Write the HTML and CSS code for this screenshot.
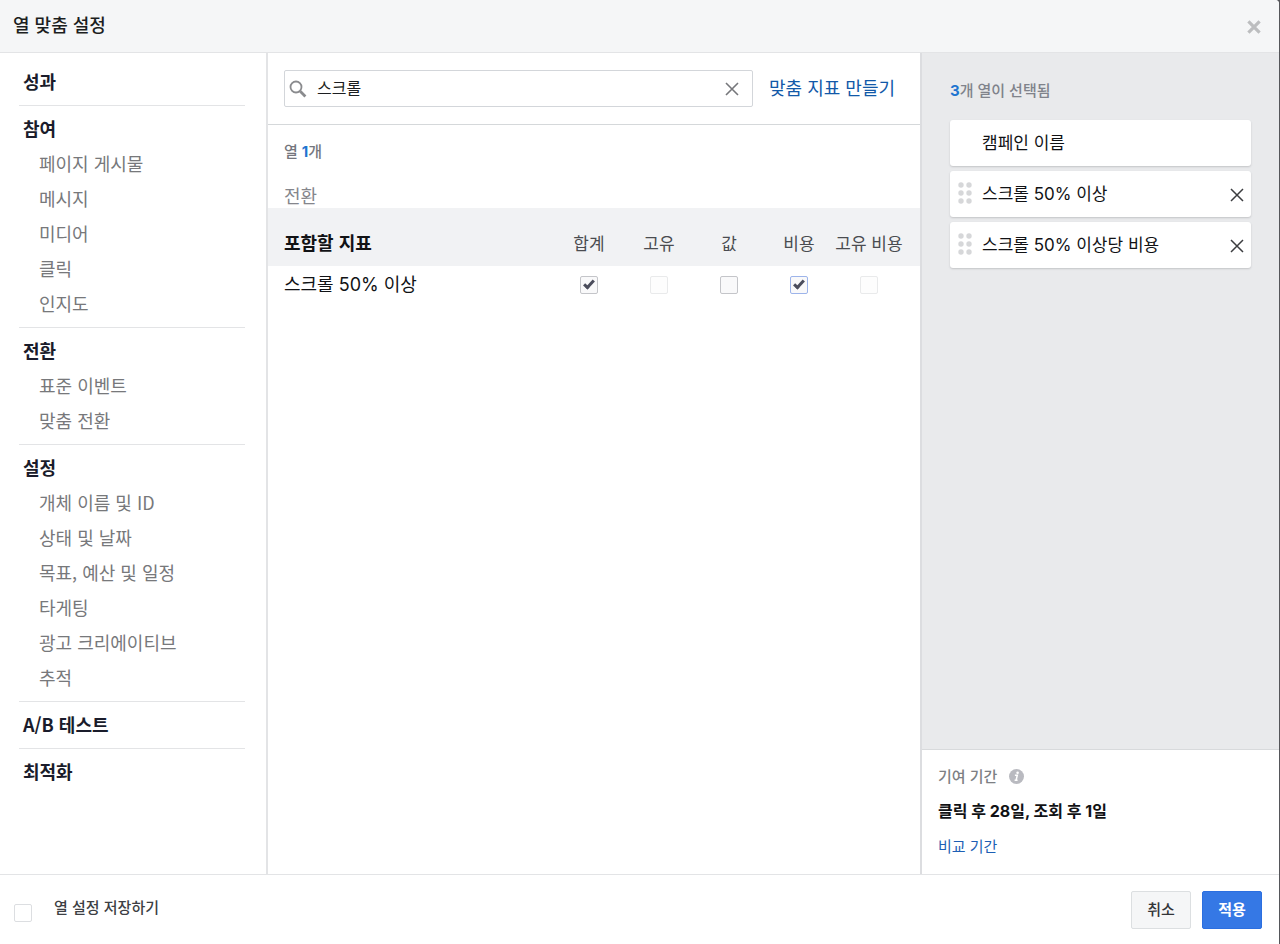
FILE: index.html
```html
<!DOCTYPE html>
<html lang="ko">
<head>
<meta charset="utf-8">
<title>열 맞춤 설정</title>
<link rel="stylesheet" href="styles.css">
</head>
<body>
<div class="dialog">
  <header class="dialog-header">
    <h1 class="dialog-title">열 맞춤 설정</h1>
    <button class="icon-button close-button" type="button" aria-label="닫기">
      <svg width="14" height="14" viewBox="0 0 14 14" fill="none" stroke="#bcbdbf" stroke-width="3.2"><path d="M1.4 1.4 12.6 12.6M12.6 1.4 1.4 12.6"/></svg>
    </button>
  </header>

  <div class="dialog-body">
    <nav class="categories">
      <section class="group"><h2 class="group-title">성과</h2></section>
      <section class="group">
        <h2 class="group-title">참여</h2>
        <a class="group-link" href="#">페이지 게시물</a>
        <a class="group-link" href="#">메시지</a>
        <a class="group-link" href="#">미디어</a>
        <a class="group-link" href="#">클릭</a>
        <a class="group-link" href="#">인지도</a>
      </section>
      <section class="group">
        <h2 class="group-title">전환</h2>
        <a class="group-link" href="#">표준 이벤트</a>
        <a class="group-link" href="#">맞춤 전환</a>
      </section>
      <section class="group">
        <h2 class="group-title">설정</h2>
        <a class="group-link" href="#">개체 이름 및 ID</a>
        <a class="group-link" href="#">상태 및 날짜</a>
        <a class="group-link" href="#">목표, 예산 및 일정</a>
        <a class="group-link" href="#">타게팅</a>
        <a class="group-link" href="#">광고 크리에이티브</a>
        <a class="group-link" href="#">추적</a>
      </section>
      <section class="group"><h2 class="group-title">A/B 테스트</h2></section>
      <section class="group"><h2 class="group-title">최적화</h2></section>
    </nav>

    <main class="metrics">
      <div class="search-row">
        <div class="search-box">
          <svg width="18" height="18" viewBox="0 0 18 18" fill="none" stroke="#8a8b8e"><circle cx="7" cy="7" r="5.5" stroke-width="1.8"/><path d="M11.2 11.2 16.4 16.4" stroke-width="2.8"/></svg>
          <input class="search-input" type="text" value="스크롤" aria-label="검색">
          <button class="icon-button" type="button" aria-label="지우기">
            <svg width="14" height="14" viewBox="0 0 14 14" fill="none" stroke="#76777b" stroke-width="1.6"><path d="M1 1 13 13M13 1 1 13"/></svg>
          </button>
        </div>
        <a class="create-link" href="#">맞춤 지표 만들기</a>
      </div>
      <p class="count">열 <b class="number">1</b>개</p>
      <h3 class="section-title">전환</h3>
      <table class="metric-table">
        <thead>
          <tr><th class="name" scope="col">포함할 지표</th><th scope="col">합계</th><th scope="col">고유</th><th scope="col">값</th><th scope="col">비용</th><th class="last" scope="col">고유 비용</th></tr>
        </thead>
        <tbody>
          <tr>
            <th class="name latin" scope="row">스크롤 50% 이상</th>
            <td><input class="check" type="checkbox" checked aria-label="합계"></td>
            <td><input class="check" type="checkbox" disabled aria-label="고유"></td>
            <td><input class="check" type="checkbox" aria-label="값"></td>
            <td><input class="check focused" type="checkbox" checked aria-label="비용"></td>
            <td class="last"><input class="check" type="checkbox" disabled aria-label="고유 비용"></td>
          </tr>
        </tbody>
      </table>
    </main>

    <aside class="selection">
      <div class="selected">
        <p class="selected-count"><b class="number">3</b>개 열이 선택됨</p>
        <ul class="cards">
          <li class="card"><span class="grip"></span><span class="card-name">캠페인 이름</span></li>
          <li class="card">
            <svg class="grip" width="14" height="22" viewBox="0 0 14 22" fill="#d6d7d9"><circle cx="3" cy="3" r="2.7"/><circle cx="11" cy="3" r="2.7"/><circle cx="3" cy="11" r="2.7"/><circle cx="11" cy="11" r="2.7"/><circle cx="3" cy="19" r="2.7"/><circle cx="11" cy="19" r="2.7"/></svg>
            <span class="card-name">스크롤 50% 이상</span>
            <button class="icon-button remove-button" type="button" aria-label="삭제"><svg width="14" height="14" viewBox="0 0 14 14" fill="none" stroke="#3c3d40" stroke-width="1.5"><path d="M1 1 13 13M13 1 1 13"/></svg></button>
          </li>
          <li class="card">
            <svg class="grip" width="14" height="22" viewBox="0 0 14 22" fill="#d6d7d9"><circle cx="3" cy="3" r="2.7"/><circle cx="11" cy="3" r="2.7"/><circle cx="3" cy="11" r="2.7"/><circle cx="11" cy="11" r="2.7"/><circle cx="3" cy="19" r="2.7"/><circle cx="11" cy="19" r="2.7"/></svg>
            <span class="card-name">스크롤 50% 이상당 비용</span>
            <button class="icon-button remove-button" type="button" aria-label="삭제"><svg width="14" height="14" viewBox="0 0 14 14" fill="none" stroke="#3c3d40" stroke-width="1.5"><path d="M1 1 13 13M13 1 1 13"/></svg></button>
          </li>
        </ul>
      </div>
      <div class="attribution">
        <p class="attribution-label">기여 기간
          <svg width="15" height="15" viewBox="0 0 15 15"><circle cx="7.5" cy="7.5" r="7.5" fill="#b9bac0"/><circle cx="8.6" cy="3.7" r="1.3" fill="#fff"/><path d="M5.9 6.3H8.3L7.1 11.3H8.6M5.6 11.3H7.1" fill="none" stroke="#fff" stroke-width="1.5"/></svg>
        </p>
        <p class="attribution-value">클릭 후 28일, 조회 후 1일</p>
        <a class="attribution-link" href="#">비교 기간</a>
      </div>
    </aside>
  </div>

  <footer class="dialog-footer">
    <input class="check save-check" type="checkbox" id="save">
    <label class="save-label" for="save">열 설정 저장하기</label>
    <button class="button" type="button">취소</button>
    <button class="button primary" type="button">적용</button>
  </footer>
</div>
</body>
</html>
```
FILE: styles.css
```css
* {
  box-sizing: border-box;
}

body {
  margin: 0;
  background: #55565a;
  color: #1c1e21;
  font-family: "Noto Sans CJK KR", sans-serif;
  font-size: 15px;
  line-height: 24px;
}

h1, h2, h3, p, ul {
  margin: 0;
  padding: 0;
  font-size: inherit;
}

a {
  text-decoration: none;
}

button, input {
  font: inherit;
}

.latin, .count, .selected-count, .card-name, .attribution-value {
  font-family: Inter, "Noto Sans CJK KR", sans-serif;
}

.icon-button {
  display: flex;
  padding: 0;
  border: 0;
  background: none;
}

.number {
  color: #1f75d0;
  font-weight: 700;
}

.dialog {
  display: flex;
  flex-direction: column;
  min-height: 100vh;
  margin-right: 1px;
  border-top-right-radius: 4px;
  background: #fff;
}

.dialog-header {
  display: flex;
  align-items: center;
  justify-content: space-between;
  height: 53px;
  padding: 0 18px 0 13px;
  border-bottom: 1px solid #e3e4e6;
  border-top-right-radius: 4px;
  background: #f5f6f7;
}

.dialog-title {
  padding-bottom: 4px;
  font-size: 18px;
  font-weight: 500;
}

.close-button {
  padding-top: 2px;
}

.dialog-body {
  display: grid;
  flex: 1;
  grid-template-columns: 268px 1fr 359px;
}

/* Category list */
.categories {
  padding: 5px 21px 5px 19px;
  border-right: 2px solid #e3e4e6;
}

.group {
  padding: 6px 0 6px 4px;
  border-top: 1px solid #e3e4e6;
}

.group:first-child {
  border-color: transparent;
}

.group-title {
  padding-bottom: 2px;
  color: #1a1c2b;
  font-size: 18px;
  font-weight: 700;
  line-height: 32px;
}

.group-link {
  display: block;
  padding-left: 16px;
  color: #77787b;
  font-size: 18px;
  line-height: 35px;
}

/* Metric picker */
.search-row {
  display: flex;
  align-items: center;
  gap: 16px;
  padding: 17px 25px 17px 16px;
  border-bottom: 1px solid #d5d8da;
}

.search-box {
  display: flex;
  flex: 1;
  align-items: center;
  height: 37px;
  padding: 0 13px 0 4px;
  border: 1px solid #d3d6da;
  border-radius: 2px;
}

.search-input {
  flex: 1;
  min-width: 0;
  padding: 0 10px 3px;
  border: 0;
  outline: 0;
  background: none;
  color: #1c1e21;
  font-size: 16px;
}

.create-link {
  padding-bottom: 3px;
  color: #1259a8;
  font-size: 18px;
}

.count {
  padding: 15px 16px 0;
  color: #74767d;
  font-weight: 500;
}

.section-title {
  padding: 19px 16px 1px;
  color: #85868c;
  font-size: 18px;
  font-weight: 400;
}

.metric-table {
  width: 100%;
  border-collapse: collapse;
  table-layout: fixed;
  font-size: 17px;
}

.metric-table thead {
  background: #f1f2f4;
}

.metric-table thead th {
  height: 58px;
  padding: 12px 0 0;
  color: #4a4c50;
  font-weight: 400;
}

.metric-table th, .metric-table td {
  width: 70px;
  padding: 0;
  text-align: center;
}

.metric-table tbody tr {
  height: 38px;
}

.metric-table th.name {
  width: auto;
  padding-left: 16px;
  color: #111215;
  font-size: 18px;
  font-weight: 400;
  text-align: left;
}

.metric-table thead th.name {
  padding-top: 10px;
  font-weight: 700;
}

.metric-table .last {
  width: 86px;
  padding-right: 16px;
  white-space: nowrap;
}

.check {
  display: block;
  width: 18px;
  height: 18px;
  margin: 0 auto;
  border: 1px solid #c4c5c9;
  border-radius: 2px;
  appearance: none;
  background: #f9f9fa;
}

.check:disabled {
  border-color: #e9eaeb;
  background: #fdfdfd;
}

.check.focused {
  border-color: #9db4ea;
}

.check:checked {
  padding: 1px 0 0 5px;
}

.check:checked::before {
  display: block;
  width: 3px;
  height: 8px;
  border: solid #4b4d5c;
  border-width: 0 3px 3px 0;
  content: "";
  transform: rotate(42deg);
}

/* Selected columns */
.selection {
  display: flex;
  flex-direction: column;
  border-left: 2px solid #dcdde0;
}

.selected {
  flex: 1;
  padding: 26px 28px 0;
  background: #e9eaec;
}

.selected-count {
  color: #80838b;
  font-weight: 500;
}

.cards {
  display: flex;
  flex-direction: column;
  gap: 5px;
  margin-top: 17px;
  list-style: none;
}

.card {
  display: flex;
  align-items: center;
  height: 46px;
  padding: 0 7px 0 8px;
  border-radius: 3px;
  background: #fff;
  box-shadow: 0 1px 2px #c3c4c6;
  color: #111215;
  font-size: 17px;
}

.grip {
  width: 14px;
  margin: 0 10px 2px 0;
}

.card-name {
  flex: 1;
}

.remove-button {
  padding-top: 2px;
}

.attribution {
  padding: 14px 16px 16px;
  border-top: 1px solid #d8dadc;
}

.attribution-label {
  display: flex;
  align-items: center;
  gap: 12px;
  color: #7d7f84;
  font-weight: 500;
}

.attribution-value {
  margin: 11px 0;
  color: #111215;
  font-size: 16px;
  font-weight: 700;
}

.attribution-link {
  color: #1d5fb4;
}

/* Footer */
.dialog-footer {
  display: flex;
  align-items: center;
  height: 70px;
  padding: 1px 17px 0 14px;
  border-top: 1px solid #e3e4e6;
}

.save-check {
  margin: 5px 22px 0 0;
  border-color: #dcdee1;
  background: #fff;
}

.save-label {
  flex: 1;
  padding-bottom: 7px;
  color: #3d3f44;
  font-weight: 500;
}

.button {
  width: 60px;
  height: 38px;
  padding: 0 0 2px;
  border: 1px solid #dcdfe1;
  border-radius: 2px;
  background: #f5f6f7;
  color: #333539;
  font-weight: 500;
}

.primary {
  margin-left: 11px;
  border-color: #2b6fe0;
  background: #3578e5;
  color: #fff;
  font-weight: 700;
}
```
